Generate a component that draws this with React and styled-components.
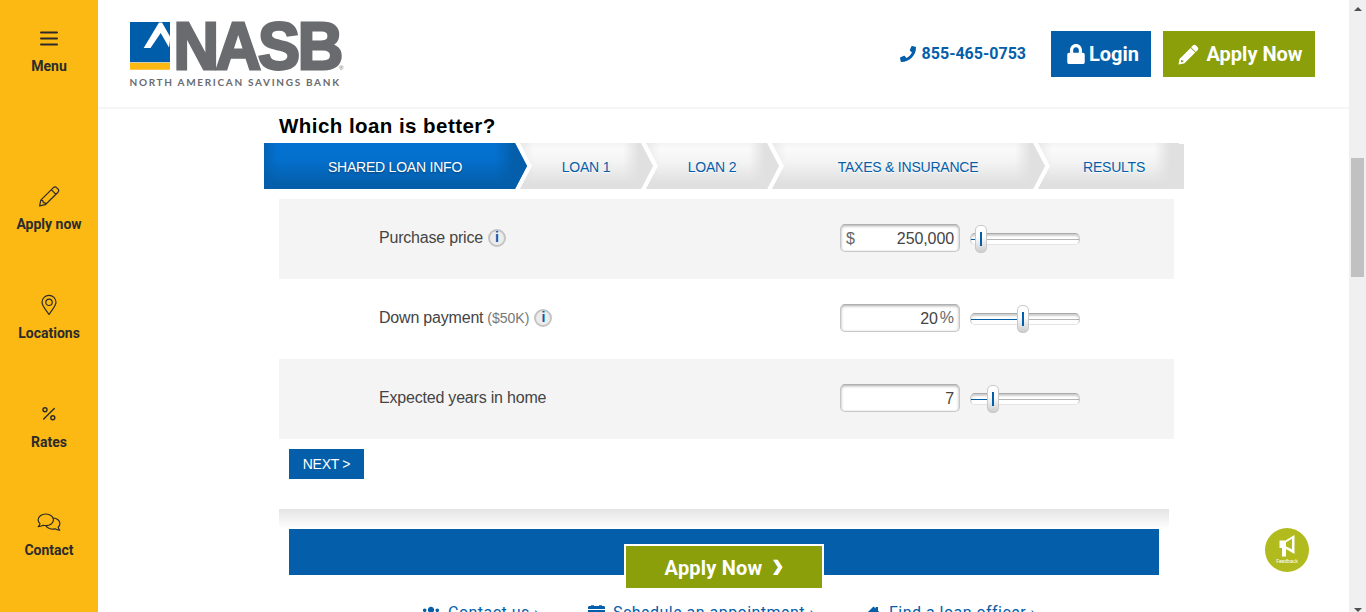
import React from "react";
import styled, { createGlobalStyle } from "styled-components";
import { FaPhone, FaLock, FaUsers } from "react-icons/fa";

const BLUE = "#045eaa";
const GREEN = "#8a9f0a";
const YELLOW = "#fdb913";

const GlobalStyle = createGlobalStyle`
  * { box-sizing: border-box; }
  body { margin: 0; overflow: hidden; background: #fff; }
`;

const Page = styled.div`
  display: grid;
  grid-template-columns: 98px 1251px 17px;
  height: 612px;
  overflow: hidden;
  font-family: "Liberation Sans", Arial, sans-serif;
`;

const Sidebar = styled.nav`
  background: ${YELLOW};
  display: flex;
  flex-direction: column;
  align-items: center;
  padding-top: 26px;
`;

const NavItem = styled.a`
  display: flex;
  flex-direction: column;
  align-items: center;
  height: 109px;
  flex: none;
  margin-bottom: ${(p) => p.$gap || 0}px;
  color: #2b2b2b;
  font: 700 14px/16px Roboto, sans-serif;

  svg { display: block; margin-bottom: 7px; }
`;

const Main = styled.main`
  height: 612px;
  overflow: hidden;
  display: flex;
  flex-direction: column;
  position: relative;
`;

const Header = styled.header`
  height: 109px;
  flex: none;
  border-bottom: 2px solid #f6f6f6;
  display: flex;
  align-items: flex-start;
  padding: 15px 34px 0 27px;
`;

const Logo = styled.svg`
  display: block;
  margin-right: auto;
`;

const Phone = styled.a`
  display: flex;
  align-items: center;
  gap: 6px;
  height: 46px;
  margin: 16px 25px 0 0;
  color: ${BLUE};
  font: 700 16px/46px Roboto, sans-serif;
`;

const HeaderButton = styled.a`
  display: flex;
  align-items: center;
  justify-content: center;
  gap: ${(p) => p.$gap}px;
  width: ${(p) => p.$width}px;
  height: 46px;
  margin: 16px 0 0 ${(p) => p.$left || 0}px;
  padding-left: 3px;
  background: ${(p) => p.$color};
  color: #fff;
  font: 700 20px/46px Roboto, sans-serif;
`;

const Calculator = styled.section`
  width: 920px;
  margin-left: 166px;
  display: flex;
  flex-direction: column;
  align-items: flex-start;
`;

const Title = styled.h2`
  margin: 0 0 0 15px;
  height: 34px;
  font-size: 20.5px;
  line-height: 33px;
  letter-spacing: 0.45px;
  color: #000;
`;

const Steps = styled.div`
  display: flex;
  height: 46px;
`;

const Step = styled.div`
  width: ${(p) => p.$width}px;
  margin-left: ${(p) => (p.$first ? 0 : -7)}px;
  padding-left: ${(p) => (p.$last ? 7 : 0)}px;
  padding-right: 1px;
  text-align: center;
  font-size: 14px;
  letter-spacing: -0.22px;
  line-height: 48px;
  color: ${(p) => (p.$first ? "#fff" : BLUE)};
  text-shadow: ${(p) => (p.$first ? "0 1px 2px rgba(0,0,0,.4)" : "0 1px 1px #fff")};
  background: ${(p) =>
    p.$first
      ? "linear-gradient(90deg, rgba(4,94,170,.7) 0, rgba(4,94,170,0) 14px, rgba(4,94,170,0) calc(100% - 32px), #045eaa calc(100% - 13px)), linear-gradient(#0471d1 0, #0470ce 35%, #045eaa 90%)"
      : "linear-gradient(90deg, rgba(224,224,224,.6) 0, rgba(224,224,224,0) 14px, rgba(224,224,224,0) calc(100% - 30px), #e0e0e0 calc(100% - 14px)), linear-gradient(#f4f4f4 0, #fafafa 14%, #f4f4f4 40%, #dfdfdf 90%)"};
  clip-path: ${(p) =>
    p.$first
      ? "polygon(0 0, calc(100% - 12px) 0, 100% 50%, calc(100% - 12px) 100%, 0 100%)"
      : p.$last
      ? "polygon(0 0, calc(100% - 5px) 0, calc(100% - 5px) 1px, 100% 1px, 100% 100%, 0 100%, 12px 50%)"
      : "polygon(0 0, calc(100% - 12px) 0, 100% 50%, calc(100% - 12px) 100%, 0 100%, 12px 50%)"};
`;

const Rows = styled.div`
  width: 895px;
  margin: 10px 0 0 15px;
`;

const Row = styled.div`
  height: 80px;
  padding: 0 94px 0 100px;
  display: flex;
  align-items: center;
  background: ${(p) => (p.$shaded ? "#f4f4f4" : "#fff")};
`;

const Label = styled.div`
  flex: 1;
  display: flex;
  align-items: center;
  margin-top: -3px;
  font-size: 16px;
  letter-spacing: -0.2px;
  line-height: 20px;
  color: #444;
`;

const Note = styled.span`
  margin-left: 4px;
  font-size: 14px;
  letter-spacing: 0;
  color: #777;
`;

const Info = styled.span`
  width: 18px;
  height: 18px;
  margin: 1px 0 0 5px;
  border: 2px solid #c4c4c4;
  border-radius: 50%;
  background: #ececec;
  color: ${BLUE};
  font-size: 14px;
  letter-spacing: 0;
  font-weight: 700;
  line-height: 13px;
  text-align: center;
`;

const Field = styled.div`
  width: 120px;
  height: 28px;
  margin-top: -2px;
  border: 1px solid #c6c6c6;
  border-top-color: #b0b0b0;
  border-radius: 5px;
  background: #fff;
  box-shadow: inset 0 1px 3px rgba(0, 0, 0, 0.35);
  display: flex;
  align-items: center;
  justify-content: flex-end;
  padding: 1px 5px 0;
  font-size: 16px;
  letter-spacing: -0.1px;
  color: #444;
`;

const Prefix = styled.span`
  margin-right: auto;
  color: #666;
`;

const Suffix = styled.span`
  margin: -2px 0 0 2px;
  font-size: 16px;
  color: #666;
`;

const Track = styled.div`
  position: relative;
  width: 110px;
  height: 12px;
  margin-left: 10px;
  border-radius: 5px;
  border: 1px solid #ccc;
  border-top-color: #aaa;
  border-bottom-color: #e4e4e4;
  background: linear-gradient(90deg, ${BLUE} ${(p) => p.$value}px, #b4b4b4 ${(p) => p.$value}px) 0 5px / 100% 1px no-repeat #fff;
  box-shadow: inset 0 2px 2px rgba(0, 0, 0, 0.2);
`;

const Handle = styled.div`
  position: absolute;
  left: ${(p) => p.$value - 1}px;
  top: -9px;
  width: 12px;
  height: 28px;
  border: 1px solid #c8c8c8;
  border-radius: 5px;
  background: linear-gradient(${BLUE}, ${BLUE}) 4px 6px / 2px 14px no-repeat,
    linear-gradient(#fff 40%, #ccc);
`;

const NextButton = styled.button`
  margin: 10px 0 0 25px;
  width: 75px;
  height: 30px;
  padding: 0;
  border: 0;
  background: ${BLUE};
  color: #fff;
  font: 14px/30px "Liberation Sans", Arial, sans-serif;
  letter-spacing: -0.3px;
`;

const Shade = styled.div`
  width: 890px;
  height: 20px;
  margin: 30px 0 0 15px;
  background: linear-gradient(#e4e4e4, #fff);
`;

const Banner = styled.div`
  width: 870px;
  height: 46px;
  margin-left: 25px;
  padding-top: 15px;
  background: ${BLUE};
`;

const BannerButton = styled.a`
  display: flex;
  align-items: center;
  justify-content: center;
  gap: 10px;
  width: 200px;
  height: 46px;
  margin: 0 auto;
  padding-top: 2px;
  border: 2px solid #fff;
  background: ${GREEN};
  color: #fff;
  font: 700 20px/40px Roboto, sans-serif;
  letter-spacing: 0.2px;
`;

const Chevron = styled.span`
  width: 11px;
  margin-top: -4px;
  font-size: 14px;
  -webkit-text-stroke: 0.5px #fff;
`;

const Links = styled.div`
  display: flex;
  margin: 28px 0 0 158px;
  color: ${BLUE};
  font: 16px/20px Roboto, sans-serif;
  letter-spacing: 0.47px;
  white-space: nowrap;
`;

const LinkItem = styled.a`
  display: flex;
  align-items: center;
  gap: 8px;
  width: ${(p) => p.$width}px;
`;

const Feedback = styled.a`
  position: absolute;
  left: 1167px;
  top: 528px;
  width: 44px;
  height: 44px;
  border-radius: 50%;
  background: #b2bb1e;
  color: #fff;
  display: flex;
  flex-direction: column;
  align-items: center;
  padding-top: 7px;
  font: 5px/8px Roboto, sans-serif;
`;

const Scrollbar = styled.div`
  background: #f0f0f0;
  display: flex;
  flex-direction: column;
  align-items: center;
  padding: 7px 0 7px;
`;

const Thumb = styled.div`
  width: 13px;
  height: 119px;
  margin: 147px 0 auto;
  background: #c1c1c1;
`;

const Arrow = styled.i`
  width: 0;
  height: 0;
  border: 4px solid transparent;
  border-${(p) => (p.$up ? "top" : "bottom")}: 0;
  border-${(p) => (p.$up ? "bottom" : "top")}-color: #505050;
`;

const line = { fill: "none", stroke: "#2b2b2b", strokeLinecap: "round", strokeLinejoin: "round" };

const MenuIcon = () => (
  <svg width="20" height="25" {...line} strokeWidth="2">
    <path d="M2 6.5h16M2 12.5h16M2 18.5h16" />
  </svg>
);
const PencilIcon = () => (
  <svg width="22" height="25" {...line} strokeWidth="1.2">
    <path d="M1.6 21.8l1.2-5.6L15.4 3.6c1-1 2.3-1 3.2 0l1.4 1.4c.9.9.9 2.2 0 3.2L7.3 20.7zM13.3 5.7l4.6 4.6M2.8 16.2l2.1.4.4 2 2 .3v1.8" />
  </svg>
);
const PinIcon = () => (
  <svg width="22" height="25" {...line} strokeWidth="1.2">
    <path d="M11 21.5C8.5 17.8 4 12.8 4 9.3a7 7 0 0 1 14 0c0 3.5-4.5 8.5-7 12.2z" />
    <circle cx="11" cy="9.3" r="3.2" />
  </svg>
);
const PercentIcon = () => (
  <svg width="22" height="25" {...line} strokeWidth="1.4">
    <path d="M16.3 6.5L5.7 17" />
    <circle cx="7" cy="7.7" r="2" />
    <circle cx="14.8" cy="15.7" r="2" />
  </svg>
);
const ChatIcon = () => (
  <svg width="24" height="25" {...line} strokeWidth="1.2">
    <path d="M1.2 16.6c1-.7 1.6-1.7 1.7-2.9C1.7 12.5 1.1 11.3 1.1 9.8 1.1 6.5 4.5 4 8.8 4s7.7 2.5 7.7 5.8-3.4 5.8-7.7 5.8c-1 0-1.9-.1-2.7-.4-1.4.9-3 1.4-4.9 1.4z" />
    <path d="M16.2 8c3.9.1 6.7 2.6 6.7 5.6 0 1.4-.6 2.7-1.7 3.7.1 1.2.7 2.1 1.6 2.8-1.8.1-3.4-.4-4.7-1.3-4.1 1-8-.6-9.3-3.2" />
  </svg>
);
const SolidPencil = () => (
  <svg width="21" height="21" viewBox="0 0 21 21" fill="currentColor">
    <path d="M14.8 1.6c1-1 2.3-1 3.2 0l1.5 1.500c1 1 1 2.200 0 3.200l-1.700 1.700-4.700-4.700z" />
    <path fillRule="evenodd" d="M12.600 3.900l4.700 4.700L6.200 19.600.5 20.600l1-5.700zM3.200 15.800l-.4 2.500 2.600-.5v-1.400H4.200z" />
  </svg>
);
const CalendarIcon = () => (
  <svg width="17" height="18" viewBox="0 0 17 18" fill="currentColor">
    <path d="M0 5V3.5C0 2.5.6 2 1.5 2H3V1.2h3V2h5v-.8h3V2h1.5c.9 0 1.5.5 1.5 1.5V5zM0 6h17v10.5c0 .9-.6 1.5-1.5 1.5h-14C.6 18 0 17.4 0 16.5z" />
  </svg>
);
const HomeIcon = () => (
  <svg width="15" height="18" viewBox="0 0 16 18" fill="currentColor">
    <path d="M8 2l2.300 2.200V2.500h2.500v4L16 10h-2v7.500h-4V12H6v5.500H2V10H0z" />
  </svg>
);

const navItems = [
  { label: "Menu", Icon: MenuIcon, gap: 49 },
  { label: "Apply now", Icon: PencilIcon },
  { label: "Locations", Icon: PinIcon },
  { label: "Rates", Icon: PercentIcon, gap: -1 },
  { label: "Contact", Icon: ChatIcon },
];

const steps = [
  ["SHARED LOAN INFO", 263],
  ["LOAN 1", 133],
  ["LOAN 2", 133],
  ["TAXES & INSURANCE", 273],
  ["RESULTS", 146],
];

const rows = [
  { label: "Purchase price", info: true, prefix: "$", value: "250,000", slider: 5 },
  { label: "Down payment", note: "($50K)", info: true, value: "20", suffix: "%", slider: 47 },
  { label: "Expected years in home", value: "7", slider: 17 },
];

export default function App() {
  return (
    <Page>
      <GlobalStyle />
      <Sidebar>
        {navItems.map(({ label, Icon, gap }) => (
          <NavItem key={label} $gap={gap}>
            <Icon />
            {label}
          </NavItem>
        ))}
      </Sidebar>
      <Main>
        <Header>
          <Logo width="225" height="80" viewBox="125 15 225 80">
            <path fill="#005daa" d="M130 22h40v40.3h-40z" />
            <path fill={YELLOW} d="M130 62.7h40v7h-40z" />
            <path fill="#fff" d="M159 22.5h3L170 36.5v3.500L169 47.500 160.700 33 150.500 48h-6.800z" />
            <g fill="#6a6b6e">
              <text y="68.600" transform="translate(173.500 0) scale(.955 1)" x="0 44 88.500 130" fontSize="66" fontWeight="700" fontFamily="Liberation Sans, sans-serif" stroke="#6a6b6e" strokeWidth="2.800">NASB</text>
              <text x="339" y="69.500" fontSize="6" fontFamily="Liberation Sans, sans-serif">®</text>
              <text x="129.500" y="86" fontSize="10" fontWeight="700" fontFamily="Lato, sans-serif" textLength="209.500">NORTH AMERICAN SAVINGS BANK</text>
            </g>
          </Logo>
          <Phone><FaPhone size={16} />855-465-0753</Phone>
          <HeaderButton $color={BLUE} $width={100} $gap={3}><FaLock size={20} />Login</HeaderButton>
          <HeaderButton $color={GREEN} $width={152} $left={12} $gap={7}><SolidPencil />Apply Now</HeaderButton>
        </Header>
        <Calculator>
          <Title>Which loan is better?</Title>
          <Steps>
            {steps.map(([name, width], i) => (
              <Step key={name} $width={width} $first={i === 0} $last={i === steps.length - 1}>{name}</Step>
            ))}
          </Steps>
          <Rows>
            {rows.map((r, i) => (
              <Row key={r.label} $shaded={i % 2 === 0}>
                <Label>
                  {r.label}
                  {r.note && <Note>{r.note}</Note>}
                  {r.info && <Info>i</Info>}
                </Label>
                <Field>
                  {r.prefix && <Prefix>{r.prefix}</Prefix>}
                  {r.value}
                  {r.suffix && <Suffix>{r.suffix}</Suffix>}
                </Field>
                <Track $value={r.slider}><Handle $value={r.slider} /></Track>
              </Row>
            ))}
          </Rows>
          <NextButton>NEXT &gt;</NextButton>
          <Shade />
          <Banner>
            <BannerButton>Apply Now <Chevron>❯</Chevron></BannerButton>
          </Banner>
          <Links>
            <LinkItem $width={166}><FaUsers size={18} />Contact us ›</LinkItem>
            <LinkItem $width={278}><CalendarIcon />Schedule an appointment ›</LinkItem>
            <LinkItem $width={180}><HomeIcon />Find a loan officer ›</LinkItem>
          </Links>
        </Calculator>
        <Feedback>
          <svg width="16" height="22" viewBox="0 0 16 22" fill="#fff">
            <path d="M.5 5.5h6L15.500 0v19l-8.500-5v7.500H3V13H.5z" />
            <path fill="#b2bb1e" d="M7 7.300l6-3.500v10.500L7 11.500z" />
          </svg>
          Feedback
        </Feedback>
      </Main>
      <Scrollbar>
        <Arrow $up />
        <Thumb />
        <Arrow />
      </Scrollbar>
    </Page>
  );
}
